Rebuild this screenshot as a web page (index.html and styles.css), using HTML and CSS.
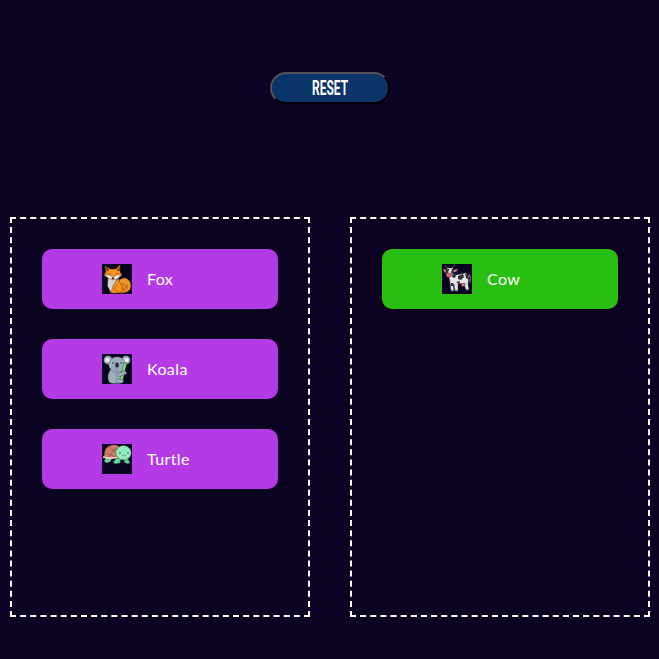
FILE: index.html
```html
<!DOCTYPE html>
<html lang="en">
<head>
<meta charset="utf-8">
<title>Animals</title>
<link rel="stylesheet" href="styles.css">
</head>
<body>
<header class="toolbar"><button class="reset" type="button"><span class="reset-label">RESET</span></button></header>
<main class="board">
  <section class="column">
    <article class="card">
      <svg class="picture" viewBox="0 0 30 30" stroke="#6b3a16" stroke-width=".5" stroke-linejoin="round">
        <path fill="#f79421" d="M19 28C24 27 25 24 22 21C20 19 18 21 16 20C17 13 25 12 28 18C31 25 26 30 17 29Z"/>
        <path fill="#f79421" d="M17 20Q23 19 25 23Q25 28 18 29Z"/>
        <path fill="#d9d5d6" d="M6 14L5.5 22L9 29H15L17 15Z"/>
        <path fill="#f79421" d="M15 15L11 22L9 29H17L22 25L18 19Z"/>
        <path fill="#f79421" d="M3 2L8 5H14L18 1L18 8L20 11L11 15L2 11L4 8Z"/>
        <path fill="#f4eeee" d="M2 11L8 11L11 14L14 11L20 11L15 15L11 16L6 14Z"/>
        <path fill="#653315" d="M4 3L7 6L5 7ZM18 3L15 6L17 7Z"/>
        <path fill="none" d="M6 10Q8 8 9 10M13 10Q15 8 16 10M19 25Q24 26 26 20M15 21L12 25L16 28"/>
        <ellipse cx="11" cy="14.5" rx="1.1" ry=".7" fill="#17121b"/>
      </svg>
      <span class="name">Fox</span>
    </article>
    <article class="card">
      <svg class="picture" viewBox="0 0 30 30" stroke="#43535e" stroke-width=".4" stroke-linecap="round" stroke-linejoin="round">
        <path fill="#9ab0bc" d="M9 15Q4 21 7 28L10 29.5H18L21 27L20 18L18 14Z"/>
        <circle cx="6" cy="6" r="4.3" fill="#9ab0bc"/><circle cx="24" cy="6" r="4.3" fill="#9ab0bc"/>
        <circle cx="5.5" cy="6" r="2.2" fill="#f5e8eb" stroke="none"/><circle cx="24.5" cy="6" r="2.2" fill="#f5e8eb" stroke="none"/>
        <ellipse cx="15" cy="10.5" rx="8.3" ry="7.7" fill="#9ab0bc"/>
        <path d="M23 10L19 27" stroke="#20542c" stroke-width="3.4"/>
        <path d="M23 10L19 27" stroke="#83d675" stroke-width="2.6"/>
        <path fill="#9ab0bc" d="M14 21L18 19L23 17L25 19L22 21L16 23ZM15 25H18L22 27L20 29H14Z"/>
        <ellipse cx="15" cy="11" rx="1.8" ry="2.5" fill="#232d38"/>
        <circle cx="11" cy="9" r=".6" fill="#18202a"/><circle cx="19" cy="9" r=".6" fill="#18202a"/>
        <path d="M13 15Q15 17 17 15" fill="none"/>
      </svg>
      <span class="name">Koala</span>
    </article>
    <article class="card">
      <svg class="picture" viewBox="0 0 30 30" stroke="#25483f" stroke-width=".4" stroke-linejoin="round">
        <path fill="#64d599" d="M4 14L2 17Q3 20 8 18L10 14ZM15 14L11 18Q12 21 18 19L19 14ZM23 14L22 18Q25 21 28 19L26 15Z"/>
        <path fill="#cf806a" stroke="#593236" d="M2 13Q2 2 10 1Q16 0 19 5L17 14Q8 15 2 13Z"/>
        <path fill="none" stroke="#593236" d="M7 3L11 6L9 11L3 9M11 6L16 4M9 11L14 13M9 11L6 13M11 6L15 10"/>
        <path fill="none" stroke="#ebd4c7" stroke-width="1.6" d="M1 13Q8 15 15 13.5"/>
        <ellipse cx="21.5" cy="8.8" rx="7.8" ry="7.2" fill="#8fecba"/>
        <circle cx="18" cy="9" r=".7" fill="#1e3f37" stroke="none"/><circle cx="26" cy="9" r=".7" fill="#1e3f37" stroke="none"/>
        <path fill="none" d="M20 11Q22 13 24 11"/>
      </svg>
      <span class="name">Turtle</span>
    </article>
  </section>
  <section class="column">
    <article class="card matched">
      <svg class="picture" viewBox="0 0 30 30" stroke="#554a50" stroke-width=".5" stroke-linejoin="round">
        <path fill="none" stroke="#77747a" stroke-width="1.1" d="M27 10Q29 13 28 19"/>
        <path fill="#e5e2e4" d="M8 9L14 11L24 9L27 12L26 20L27 26H24L22 20L16 19V27H13L12 20L11 20L12 27H9L8 18L7 13Z"/>
        <path fill="#343137" stroke="none" d="M11 9L14 11L13 14L10 13ZM16 12L21 10L22 13L19 16L16 15ZM23 10L26 10L27 16L24 14ZM14 18L18 17L17 20ZM9 19L11 19L11 22H9Z"/>
        <path fill="#e26c76" d="M19 20L23 19L23 22L20 22.5Z"/>
        <path fill="#c8868e" d="M5 6L1 5L2 8L5 9ZM11 6L16 5L14 8L11 8Z"/>
        <path fill="#dddadd" d="M5 4L11 4L11 9L9 12H5L4 8Z"/>
        <path fill="#343137" stroke="none" d="M4 5L7 5L6 9H4ZM10 5L12 5L11 9H9Z"/>
        <path fill="none" stroke="#c99b78" d="M5 4L3 1M10 4L13 1"/>
        <path fill="#e66170" d="M4 10Q7 8 10 10L9 13H5Z"/>
        <path stroke="#4a474d" stroke-width="1" d="M9 27H12M13 27H16M24 26H27"/>
      </svg>
      <span class="name">Cow</span>
    </article>
  </section>
</main>
</body>
</html>
```
FILE: styles.css
```css
* { box-sizing: border-box; }
body { margin: 0; background: #0b0321; color: #fff; font-family: Lato, sans-serif; }
.toolbar { display: flex; justify-content: center; padding: 72px 0 113px; }
.reset { display: flex; align-items: center; justify-content: center; width: 120px; height: 32px; padding: 0; border: 2px outset #000; border-radius: 20px; background: #0b3468; color: #fff; }
.reset-label { margin-left: 2px; font: 700 20px/28px Roboto, sans-serif; transform: scaleX(.6); }
.board { display: flex; gap: 40px; margin-left: 10px; }
.column { display: flex; flex-direction: column; gap: 30px; width: 300px; height: 400px; padding: 30px; border: 2px dashed #fff; }
.card { display: flex; align-items: center; gap: 15px; height: 60px; padding-left: 60px; border-radius: 10px; background: #b43ae5; }
.matched { background: #29bf12; }
.picture { width: 30px; height: 30px; background: #080320; }
.name { font-size: 16px; line-height: 24px; letter-spacing: .4px; }
```
